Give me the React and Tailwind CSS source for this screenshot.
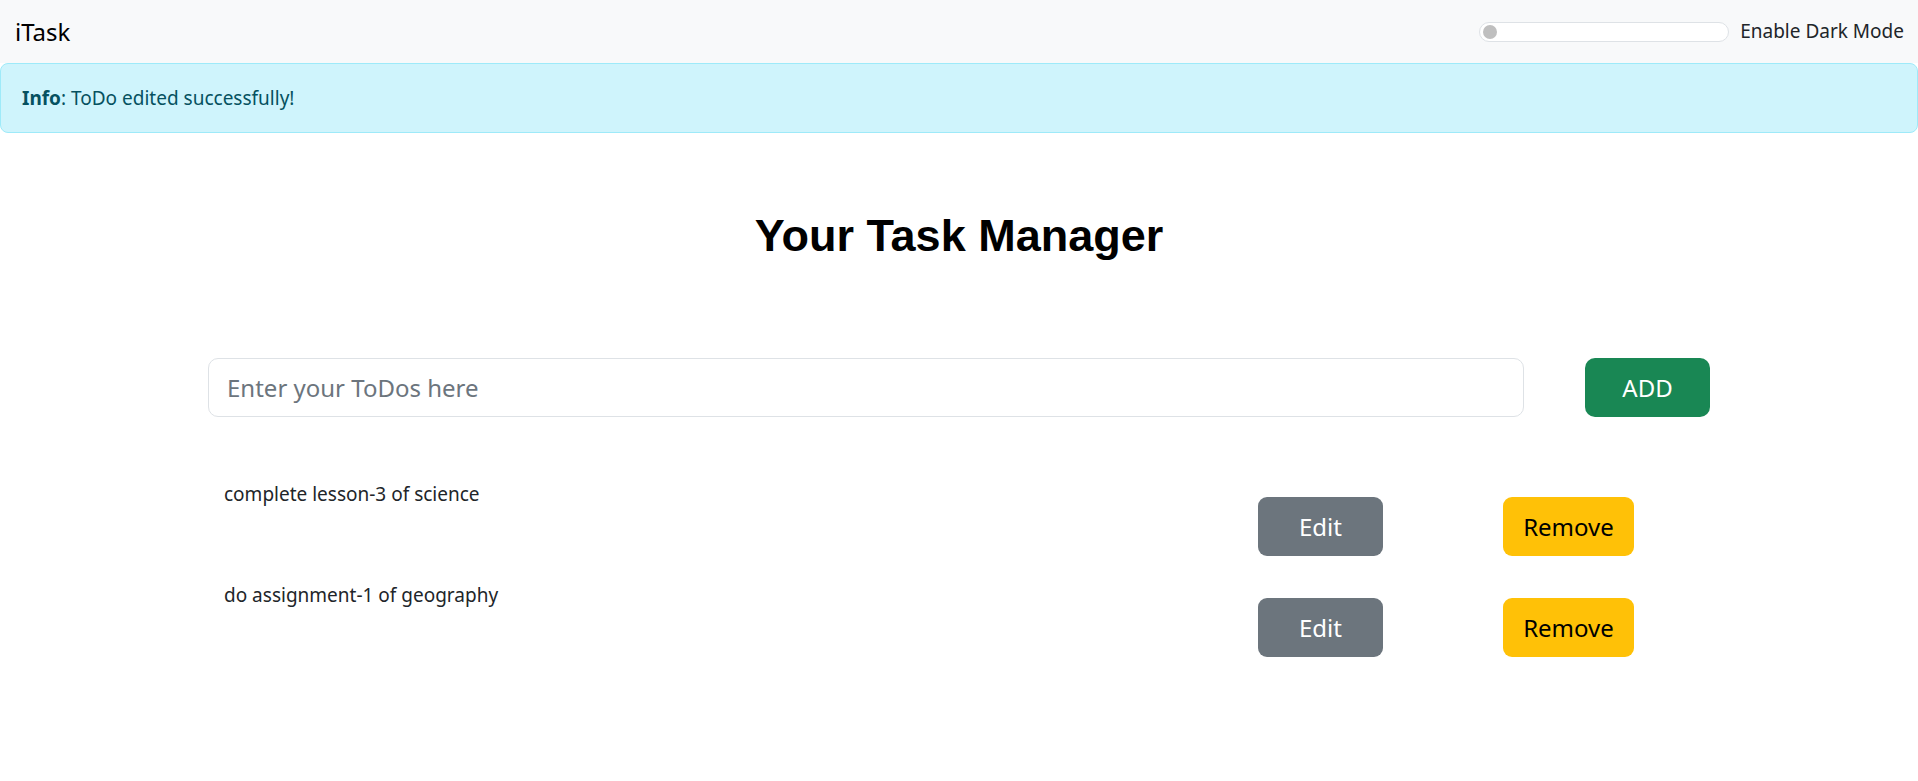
import React from "react";

const todos = [
  { id: 1, text: "complete lesson-3 of science" },
  { id: 2, text: "do assignment-1 of geography" },
];

function Navbar() {
  return (
    <nav className="h-[63px] bg-[#f8f9fa] flex items-center justify-between pl-[15px] pr-[14px]">
      <span className="text-[24px] text-black leading-none">iTask</span>
      <div className="flex items-center gap-[11px]">
        <div className="w-[250px] h-[20px] rounded-full border border-[#dee2e6] bg-white flex items-center pl-[3px]">
          <div className="w-[14px] h-[14px] rounded-full bg-[#bfbfbf]" />
        </div>
        <span className="text-[19px] text-[#212529]">Enable Dark Mode</span>
      </div>
    </nav>
  );
}

function Alert() {
  return (
    <div className="h-[70px] border border-[#9eeaf9] bg-[#cff4fc] rounded-[8px] flex items-center pl-[21px] text-[19px] text-[#055160]">
      <strong className="font-bold">Info</strong>: ToDo edited successfully!
    </div>
  );
}

function TodoRow({ text }) {
  return (
    <div className="grid grid-cols-[1050px_245px_1fr] h-[101px]">
      <div className="pl-4 pt-[1px] text-[19px] leading-[30px] text-[#212529]">{text}</div>
      <div className="pt-[19px]">
        <button className="w-[125px] h-[59px] rounded-[9px] bg-[#6c757d] text-white text-[24px]">Edit</button>
      </div>
      <div className="pt-[19px]">
        <button className="w-[131px] h-[59px] rounded-[9px] bg-[#ffc107] text-black text-[24px]">Remove</button>
      </div>
    </div>
  );
}

export default function App() {
  return (
    <div className="min-h-screen bg-white font-['Noto_Sans','Open_Sans',sans-serif]">
      <Navbar />
      <Alert />
      <h1 className="text-center mt-[71px] text-[45px] leading-[64px] font-bold text-black font-['Liberation_Sans',Arial,sans-serif]">
        Your Task Manager
      </h1>

      <div className="w-[1502px] mx-auto mt-[90px]">
        <div className="flex items-center gap-[61px]">
          <input
            className="flex-1 h-[59px] rounded-[10px] border border-[#dee2e6] px-[18px] text-[24px] text-[#212529] placeholder:text-[#6c757d] outline-none"
            placeholder="Enter your ToDos here"
          />
          <button className="w-[125px] h-[59px] rounded-[10px] bg-[#198754] text-white text-[24px]">ADD</button>
        </div>

        <div className="mt-[61px]">
          {todos.map((t) => (
            <TodoRow key={t.id} text={t.text} />
          ))}
        </div>
      </div>
    </div>
  );
}
